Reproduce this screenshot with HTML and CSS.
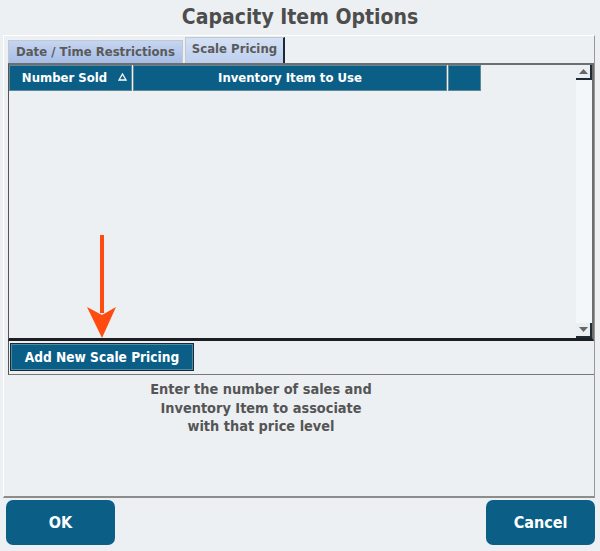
FILE: index.html
```html
<!DOCTYPE html>
<html lang="en">
<head>
  <meta charset="UTF-8" />
  <meta name="viewport" content="width=device-width, initial-scale=1.0" />
  <title>Capacity Item Options</title>
  <link rel="stylesheet" href="styles.css">
</head>
<body>
  <div class="dialog">
    <h1 class="title">Capacity Item Options</h1>

    <div class="panel">
      <div class="tabs">
        <div class="tab">Date / Time Restrictions</div>
        <div class="tab active">Scale Pricing</div>
      </div>

      <div class="grid">
        <div class="grid-body">
          <div class="grid-head">
            <div class="col col-num">Number Sold
              <svg class="sort" width="9" height="8" viewBox="0 0 9 8"><path d="M4.5 1 L8 7 L1 7 Z" fill="none" stroke="#fff" stroke-width="1.3"/></svg>
            </div>
            <div class="col col-item">Inventory Item to Use</div>
            <div class="col col-extra"></div>
          </div>
        </div>
        <div class="scrollbar">
          <div class="scroll-btn"><svg width="9" height="5" viewBox="0 0 9 5"><path d="M4.5 0 L9 5 L0 5 Z" fill="#666"/></svg></div>
          <div class="track"></div>
          <div class="scroll-btn"><svg width="9" height="5" viewBox="0 0 9 5"><path d="M0 0 L9 0 L4.5 5 Z" fill="#666"/></svg></div>
        </div>
      </div>

      <div class="grid-actions">
        <button class="add-btn">Add New Scale Pricing</button>
      </div>

      <p class="hint">Enter the number of sales and<br>Inventory Item to associate<br>with that price level</p>
    </div>

    <div class="footer">
      <button class="btn">OK</button>
      <button class="btn">Cancel</button>
    </div>

    <!-- arrow pointing at the add button -->
    <svg class="callout" width="32" height="104" viewBox="0 0 32 104">
      <rect x="14" y="0" width="4" height="78" fill="#ff4b0f"/>
      <path d="M1 72 L16 103 L30 72 L16 80 Z" fill="#ff4b0f"/>
    </svg>
  </div>
</body>
</html>
```

FILE: styles.css
```css
body {
  margin: 0;
  background: #ecf0f3;
  font-family: "DejaVu Sans Condensed", "DejaVu Sans", sans-serif;
  font-stretch: condensed;
  color: #505050;
}
.dialog {
  position: relative;
  width: 600px;
  height: 551px;
}
.title {
  margin: 0;
  height: 35px;
  line-height: 35px;
  text-align: center;
  font-size: 21px;
  font-weight: bold;
  color: #4d4d4d;
}
.panel {
  box-sizing: border-box;
  width: 592px;
  height: 463px;
  margin-left: 3px;
  padding-left: 4px;
  border-top: 1px solid #fff;
  border-left: 1px solid #fff;
  border-right: 1px solid #999;
  border-bottom: 2px solid #8c8c8c;
  display: flex;
  flex-direction: column;
}
.tabs {
  height: 27px;
  display: flex;
  align-items: flex-end;
  gap: 2px;
}
.tab {
  box-sizing: border-box;
  height: 23px;
  padding: 0 7px;
  line-height: 21px;
  font-size: 13px;
  font-weight: bold;
  color: #5a5a5a;
  background: linear-gradient(#c6d5f0, #a6bde6);
  border: 1px solid #c0c8d4;
  border-bottom: none;
}
.tab.active {
  height: 26px;
  line-height: 22px;
  padding: 0 6px;
  background: linear-gradient(#d5e1f4, #bccfee);
  border-right: 2px solid #1c2838;
}
.grid {
  box-sizing: border-box;
  height: 278px;
  display: flex;
  border-top: 2px solid #6e6e6e;
  border-left: 1px solid #555;
  border-right: 2px solid #6e6e6e;
  border-bottom: 3px solid #1b1f24;
}
.grid-body {
  flex: 1;
}
.grid-head {
  display: flex;
  height: 26px;
  gap: 1px;
  background: #ecf0f3;
  width: 472px;
}
.col {
  box-sizing: border-box;
  background: #0b5f87;
  border: 1px solid #5e8898;
  color: #fff;
  font-size: 13px;
  font-weight: bold;
  line-height: 24px;
  text-align: center;
}
.col-num {
  width: 123px;
  position: relative;
  padding-right: 12px;
}
.sort {
  position: absolute;
  right: 4px;
  top: 7px;
}
.col-item {
  width: 314px;
}
.col-extra {
  width: 33px;
}
.scrollbar {
  width: 16px;
  display: flex;
  flex-direction: column;
  background: #f4f7f9;
}
.scroll-btn {
  box-sizing: border-box;
  height: 15px;
  display: flex;
  align-items: center;
  justify-content: center;
  background: #eaeff2;
  border-right: 2px solid #1f2a33;
  border-bottom: 2px solid #1f2a33;
}
.track {
  flex: 1;
}
.grid-actions {
  box-sizing: border-box;
  height: 34px;
  padding: 2px 0 0 1px;
  border-left: 1px solid #555;
  border-bottom: 1px solid #777;
}
.add-btn {
  box-sizing: border-box;
  width: 184px;
  height: 28px;
  background: #0b5f87;
  border: 1px solid #1a2a35;
  box-shadow: inset 0 0 0 1px #4f8aa3;
  color: #fff;
  font-family: inherit;
  font-stretch: condensed;
  font-size: 13.6px;
  font-weight: bold;
  padding: 0;
}
.hint {
  margin: 5px 80px 0 0;
  text-align: center;
  font-size: 14.4px;
  font-weight: bold;
  line-height: 18.5px;
  color: #555;
}
.footer {
  display: flex;
  justify-content: space-between;
  padding: 2px 5px 0 6px;
}
.btn {
  width: 109px;
  height: 45px;
  border: none;
  border-radius: 7px;
  background: #0b5f87;
  color: #fff;
  font-family: inherit;
  font-stretch: condensed;
  font-size: 16px;
  font-weight: bold;
}
.callout {
  position: absolute;
  left: 86px;
  top: 235px;
}
```
